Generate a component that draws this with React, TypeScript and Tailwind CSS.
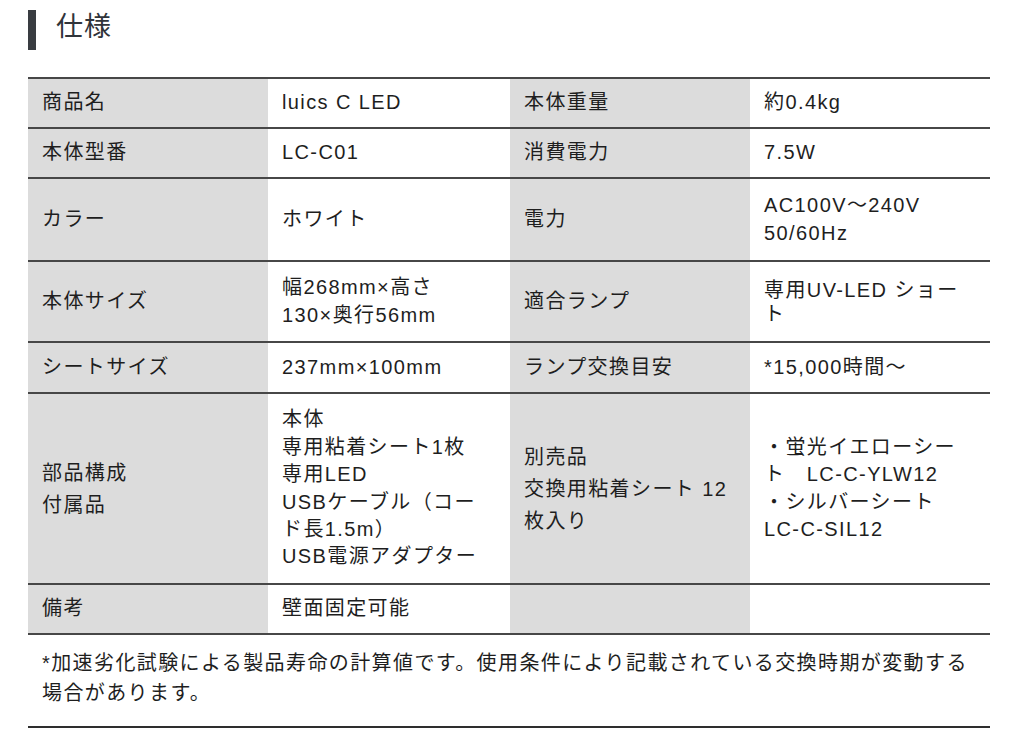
type Cell = { lines: string[]; leading?: string };

type Row = {
  h: string;
  cells: [Cell, Cell, Cell, Cell];
};

// 行の高さは下線2pxを含む
const rows: Row[] = [
  {
    h: "h-[50px]",
    cells: [
      { lines: ["商品名"] },
      { lines: ["luics C LED"] },
      { lines: ["本体重量"] },
      { lines: ["約0.4kg"] },
    ],
  },
  {
    h: "h-[50px]",
    cells: [
      { lines: ["本体型番"] },
      { lines: ["LC-C01"] },
      { lines: ["消費電力"] },
      { lines: ["7.5W"] },
    ],
  },
  {
    h: "h-[83px]",
    cells: [
      { lines: ["カラー"] },
      { lines: ["ホワイト"] },
      { lines: ["電力"] },
      { lines: ["AC100V〜240V", "50/60Hz"] },
    ],
  },
  {
    h: "h-[81px]",
    cells: [
      { lines: ["本体サイズ"] },
      { lines: ["幅268mm×高さ", "130×奥行56mm"] },
      { lines: ["適合ランプ"] },
      { lines: ["専用UV-LED ショー", "ト"], leading: "leading-[24px]" },
    ],
  },
  {
    h: "h-[51px]",
    cells: [
      { lines: ["シートサイズ"] },
      { lines: ["237mm×100mm"] },
      { lines: ["ランプ交換目安"] },
      { lines: ["*15,000時間〜"] },
    ],
  },
  {
    h: "h-[191px]",
    cells: [
      { lines: ["部品構成", "付属品"], leading: "leading-[32px]" },
      {
        lines: [
          "本体",
          "専用粘着シート1枚",
          "専用LED",
          "USBケーブル（コー",
          "ド長1.5m）",
          "USB電源アダプター",
        ],
      },
      { lines: ["別売品", "交換用粘着シート 12", "枚入り"], leading: "leading-[32px]" },
      { lines: ["・蛍光イエローシー", "ト　LC-C-YLW12", "・シルバーシート", "LC-C-SIL12"] },
    ],
  },
  {
    h: "h-[50px]",
    cells: [
      { lines: ["備考"] },
      { lines: ["壁面固定可能"] },
      { lines: [] },
      { lines: [] },
    ],
  },
];

export default function App() {
  return (
    <div className="w-[1024px] h-[739px] overflow-hidden bg-white pl-[28px] pr-[34px] pt-[10px] font-['Liberation_Sans','Noto_Sans_CJK_JP',sans-serif] text-[#1e1e1e]">
      {/* 見出し */}
      <div className="flex items-center h-[40px]">
        <div className="w-[8px] h-[40px] bg-[#393c41]" />
        <h2 className="ml-[20px] -mt-[6px] text-[27px] tracking-[0.04em] text-[#30343a]">仕様</h2>
      </div>

      {/* 仕様テーブル */}
      <div className="mt-[27px] border-t-2 border-[#474747]">
        {rows.map((row, i) => (
          <div
            key={i}
            className={`grid grid-cols-[240px_242px_240px_240px] border-b-2 border-[#474747] ${row.h}`}
          >
            {row.cells.map((cell, j) => (
              <div
                key={j}
                className={`flex flex-col justify-center px-[14px] text-[20px] tracking-[0.07em] ${
                  cell.leading ?? "leading-[27.4px]"
                } ${j % 2 === 0 ? "bg-[#dcdcdc]" : "bg-white"}`}
              >
                {cell.lines.map((line, k) => (
                  <span key={k} className="whitespace-nowrap">
                    {line}
                  </span>
                ))}
              </div>
            ))}
          </div>
        ))}
      </div>

      {/* 注記 */}
      <div className="pt-[13px] pb-[18px] px-[14px] border-b-2 border-[#2e2e2e] text-[20px] leading-[30px] tracking-[0.07em]">
        <p>
          *加速劣化試験による製品寿命の計算値です。使用条件により記載されている交換時期が変動する
          <br />
          場合があります。
        </p>
      </div>
    </div>
  );
}
